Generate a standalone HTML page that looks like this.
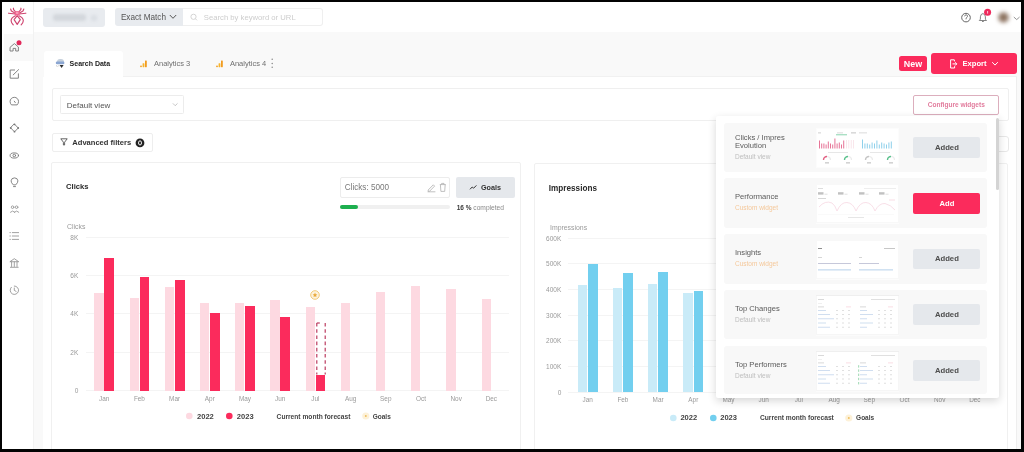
<!DOCTYPE html>
<html><head><meta charset="utf-8"><title>Dashboard</title>
<style>
html,body{margin:0;padding:0;}
body{width:1024px;height:452px;position:relative;overflow:hidden;background:#f9f9f9;font-family:"Liberation Sans", sans-serif;}
body div{position:absolute;box-sizing:border-box;}
.t{white-space:nowrap;filter:blur(0.25px);}
svg{position:absolute;overflow:visible;}
</style></head><body>

<div style="left:34.00px;top:2.00px;width:987.00px;height:30.30px;background:#fff;"></div>
<div style="left:2.00px;top:2.00px;width:32.30px;height:447.00px;background:#fff;border-right:1px solid #f2f2f2;"></div>
<div style="left:4.00px;top:34.00px;width:29.30px;height:26.50px;background:#f9f9f9;"></div>
<svg style="left:0;top:0" width="40" height="40" viewBox="0 0 40 40">
<g fill="none" stroke="#cf4570" stroke-width="1.15" stroke-linecap="round" stroke-linejoin="round">
<path d="M17.2 15.6 L14.1 19.6 L17.2 24.4 L20.3 19.6 Z"/>
<path d="M15.4 15.8 Q11 17.8 11.1 20.8 Q11.3 23.2 13.2 24.8"/>
<path d="M19 15.8 Q23.4 17.8 23.3 20.8 Q23.1 23.2 21.2 24.8"/>
<path d="M15.8 13.4 L11.4 11 L10.6 9 M15.5 14 L8.6 13.2 M16 12.4 L13.6 9.6 L13.4 8.2 M18.6 13.4 L23 11 L23.8 9 M18.9 14 L25.8 13.2 M18.4 12.4 L20.8 9.6 L21 8.2"/>
</g>
<ellipse cx="17.2" cy="13.2" rx="2.8" ry="2.3" fill="#ef6690"/>
<ellipse cx="17.2" cy="12.9" rx="1.4" ry="1.1" fill="#f7a0b8"/>
</svg>
<svg style="left:0;top:0" width="34" height="300" viewBox="0 0 34 300">
<g fill="none" stroke="#777" stroke-width="0.9" stroke-linejoin="round" stroke-linecap="round">
<path d="M10.4 47 L14.4 43.6 L18.4 47 L18.4 51 L15.7 51 L15.7 48.4 L13.1 48.4 L13.1 51 L10.4 51 Z"/>
<path d="M14.6 70 L10.2 70 L10.2 78.2 L18.4 78.2 L18.4 73.8"/><path d="M13.2 74.9 L18.6 69.6"/>
<path d="M11.2 104.6 A4.3 4.3 0 1 1 17.4 104.6 Z"/><path d="M14.3 101.2 L15.3 102.6"/>
<path d="M14.5 124.2 L18.3 128 L14.5 131.8 L10.7 128 Z"/><g fill="#777" stroke="none"><circle cx="14.5" cy="124.3" r="0.9"/><circle cx="18.2" cy="128" r="0.9"/><circle cx="14.5" cy="131.7" r="0.9"/><circle cx="10.8" cy="128" r="0.9"/></g>
<ellipse cx="14.3" cy="155.5" rx="4.2" ry="2.6"/><circle cx="14.3" cy="155.5" r="1.3"/>
<path d="M13 184.6 Q11 182.6 11.1 180.8 Q11.4 177.9 14.5 177.9 Q17.6 177.9 17.9 180.8 Q18 182.6 16 184.6 Z M13.5 186.6 L15.5 186.6"/>
<g stroke="#999"><circle cx="12.6" cy="207.2" r="1.3"/><circle cx="16.6" cy="207.2" r="1.3"/><path d="M10.4 212.2 Q12.6 209.6 14.8 212.2 M14.4 212.2 Q16.6 209.6 18.8 212.2"/></g>
<g stroke="#8a8a8a" stroke-width="0.8"><path d="M12.3 232.6 L18.6 232.6 M12.3 236 L18.6 236 M12.3 239.4 L18.6 239.4 M9.9 232.6 L10.4 232.6 M9.9 236 L10.4 236 M9.9 239.4 L10.4 239.4"/>
<path d="M10.2 261.5 L14.3 258.7 L18.4 261.5 Z M10.4 267.3 L18.2 267.3 M11.6 262 L11.6 266.5 M14.3 262 L14.3 266.5 M17 262 L17 266.5"/>
<path d="M11.3 287.3 A4.2 4.2 0 1 0 14.3 286"/><path d="M14.3 288 L14.3 290.4 L16.1 291.4"/></g>
</g>
<circle cx="19" cy="42.7" r="2.5" fill="#e2285a"/>
</svg>
<div style="left:43.00px;top:8.00px;width:62.00px;height:19.00px;background:#e8ebef;border-radius:3px;filter:blur(0.7px);"></div>
<div style="left:53.00px;top:14.00px;width:33.00px;height:7.00px;background:#d3d7dc;border-radius:3px;filter:blur(1.8px);"></div>
<div style="left:91.00px;top:14.50px;width:6.00px;height:6.00px;background:#dadee3;border-radius:2px;filter:blur(1.5px);"></div>
<div style="left:114.70px;top:7.90px;width:68.30px;height:18.00px;background:#e8ebef;border-radius:3px 0 0 3px;"></div>
<div class="t" style="left:120.90px;top:8.20px;height:20px;line-height:20px;font-size:8.2px;color:#555;font-weight:400;">Exact Match</div>
<svg style="left:168px;top:13px" width="10" height="8" viewBox="0 0 10 8"><path d="M1.8 2 L5 5.3 L8.2 2" fill="none" stroke="#555" stroke-width="1"/></svg>
<div style="left:182.50px;top:8.00px;width:140.00px;height:18.00px;background:#fff;border:1px solid #efefef;border-left:none;border-radius:0 3px 3px 0;"></div>
<svg style="left:189px;top:12px" width="12" height="12" viewBox="0 0 12 12"><circle cx="4.5" cy="4.8" r="2.6" fill="none" stroke="#cfcfcf" stroke-width="0.9"/><path d="M6.5 6.8 L8 8.3" stroke="#cfcfcf" stroke-width="0.9"/></svg>
<div class="t" style="left:203.80px;top:7.90px;height:20px;line-height:20px;font-size:7.7px;color:#cdcdcd;font-weight:400;">Search by keyword or URL</div>
<svg style="left:955px;top:6px" width="70" height="24" viewBox="955 6 70 24"><circle cx="966" cy="17.6" r="4.3" fill="none" stroke="#555" stroke-width="0.9"/><path d="M964.6 16.3 Q964.8 14.8 966.2 14.8 Q967.7 15 967.5 16.4 Q967.2 17.4 966.1 18.2 L966 19.3" fill="none" stroke="#555" stroke-width="0.8"/><path d="M979.3 20.5 L980.4 19.2 L980.4 16.8 Q980.7 13.8 982.9 13.6 Q985.1 13.8 985.4 16.8 L985.4 19.2 L986.5 20.5 Z M982 21.5 L983.8 21.5" fill="none" stroke="#777" stroke-width="0.9"/><circle cx="987.6" cy="12.3" r="3.5" fill="#ee2a5c"/><path d="M987.6 11 L987.6 13.6" stroke="#fff" stroke-width="0.9" opacity="0.8"/><circle cx="1003.5" cy="17.4" r="5.2" fill="#8c725f" style="filter:blur(2px)"/><path d="M1013.8 17 L1016.7 19.6 L1019.6 17" fill="none" stroke="#888" stroke-width="0.9"/></svg>
<div style="left:44.00px;top:51.00px;width:79.00px;height:27.00px;background:#fff;border-radius:3px 3px 0 0;"></div>
<div style="left:43.00px;top:77.00px;width:974.00px;height:372.00px;background:#fff;border-right:1px solid #eeeeee;"></div>
<div style="left:122.50px;top:76.00px;width:894.50px;height:1.00px;background:#f1f1f1;"></div>
<svg style="left:54px;top:57px" width="14" height="14" viewBox="0 0 14 14"><path d="M3 5 Q3 2 6 2 L7 2 Q10 2 10 5 Z" fill="#c5d0dc"/><rect x="1.8" y="4.5" width="8.6" height="2.7" rx="1.3" fill="#8ba6d2"/><path d="M2.4 8.2 L3.4 10 M4.2 8.8 L5.4 8.8" stroke="#bbb" stroke-width="0.7"/><path d="M5.6 8 L7.6 11 L9.6 8 Z" fill="#2f2f2f"/></svg>
<div class="t" style="left:69.60px;top:53.80px;height:20px;line-height:20px;font-size:7.0px;color:#222;font-weight:700;">Search Data</div>
<svg style="left:140.2px;top:60px" width="8" height="8" viewBox="0 0 8 8"><circle cx="1" cy="6.3" r="0.9" fill="#f29c1f"/><rect x="2.6" y="3.2" width="1.8" height="4" rx="0.4" fill="#f7b52c"/><rect x="5" y="0.5" width="1.8" height="6.7" rx="0.4" fill="#f29c1f"/></svg>
<div class="t" style="left:154.00px;top:53.70px;height:20px;line-height:20px;font-size:7.5px;color:#6f6f6f;font-weight:400;">Analytics 3</div>
<svg style="left:216px;top:60px" width="8" height="8" viewBox="0 0 8 8"><circle cx="1" cy="6.3" r="0.9" fill="#f29c1f"/><rect x="2.6" y="3.2" width="1.8" height="4" rx="0.4" fill="#f7b52c"/><rect x="5" y="0.5" width="1.8" height="6.7" rx="0.4" fill="#f29c1f"/></svg>
<div class="t" style="left:229.90px;top:53.70px;height:20px;line-height:20px;font-size:7.5px;color:#6f6f6f;font-weight:400;">Analytics 4</div>
<svg style="left:270px;top:56px" width="4" height="16" viewBox="0 0 4 16"><circle cx="2.2" cy="3.2" r="0.75" fill="#888"/><circle cx="2.2" cy="7.5" r="0.75" fill="#888"/><circle cx="2.2" cy="11.2" r="0.75" fill="#888"/></svg>
<div style="left:899.30px;top:56.00px;width:27.70px;height:14.50px;background:#fb2b5c;border-radius:2.5px;"></div>
<div class="t" style="left:903.80px;top:54.20px;height:20px;line-height:20px;font-size:8.9px;color:#fff;font-weight:700;">New</div>
<div style="left:931.00px;top:52.70px;width:86.00px;height:21.10px;background:#fb2b5c;border-radius:3px;"></div>
<svg style="left:948px;top:58px" width="11" height="12" viewBox="0 0 11 12"><path d="M6.3 1.8 L2.6 1.8 L2.6 10 L6.6 10 L6.6 8.2" fill="none" stroke="#fff" stroke-width="1"/><path d="M4.5 5.9 L8.8 5.9 M7.2 4.3 L8.8 5.9 L7.2 7.5" fill="none" stroke="#fff" stroke-width="1"/><path d="M6.3 1.8 L6.6 3.4" stroke="#fff" stroke-width="1"/></svg>
<div class="t" style="left:962.50px;top:54.40px;height:20px;line-height:20px;font-size:7.6px;color:#fff;font-weight:700;">Export</div>
<svg style="left:990px;top:61px" width="10" height="6" viewBox="0 0 10 6"><path d="M2.2 1.2 L5 4.1 L7.8 1.2" fill="none" stroke="#fff" stroke-width="1"/></svg>
<div style="left:51.50px;top:88.00px;width:957.00px;height:33.00px;border:1px solid #efefef;border-radius:2px;background:#fff;"></div>
<div style="left:60.30px;top:95.30px;width:123.90px;height:18.60px;border:1px solid #ececec;border-radius:1.5px;background:#fff;"></div>
<div class="t" style="left:66.80px;top:96.10px;height:20px;line-height:20px;font-size:8.0px;color:#555;font-weight:400;">Default view</div>
<svg style="left:171px;top:102px" width="8" height="6" viewBox="0 0 8 6"><path d="M1.9 1.4 L4.2 3.7 L6.5 1.4" fill="none" stroke="#bdbdbd" stroke-width="0.9"/></svg>
<div style="left:913.20px;top:95.20px;width:86.20px;height:19.40px;border:1px solid #dcaebd;border-radius:2px;background:#fff;"></div>
<div class="t" style="left:927.70px;top:95.40px;height:20px;line-height:20px;font-size:6.56px;color:#e27c9d;font-weight:700;">Configure widgets</div>
<div style="left:52.00px;top:132.50px;width:100.50px;height:19.30px;border:1px solid #eeeeee;border-radius:2px;background:#fff;"></div>
<svg style="left:59px;top:137px" width="10" height="10" viewBox="0 0 10 10"><path d="M1.8 1.8 L8.2 1.8 L5.6 5.2 L5.6 8 L4.4 8 L4.4 5.2 Z" fill="none" stroke="#555" stroke-width="0.9" stroke-linejoin="round"/></svg>
<div class="t" style="left:72.30px;top:133.30px;height:20px;line-height:20px;font-size:7.57px;color:#333;font-weight:700;">Advanced filters</div>
<svg style="left:134.5px;top:137.5px" width="10" height="10" viewBox="0 0 10 10"><circle cx="5" cy="4.9" r="4.4" fill="#222"/><ellipse cx="5" cy="4.9" rx="1.5" ry="2.1" fill="none" stroke="#fff" stroke-width="0.95"/></svg>
<div style="left:990.00px;top:135.50px;width:19.00px;height:16.00px;border:1px solid #e8e8e8;border-radius:3px;background:#fff;"></div>
<div style="left:51.30px;top:161.60px;width:470.20px;height:298.40px;border:1px solid #f0f0f0;border-radius:2px;background:#fff;"></div>
<div style="left:534.30px;top:162.50px;width:474.20px;height:297.50px;border:1px solid #f0f0f0;border-radius:2px;background:#fff;"></div>
<div class="t" style="left:66.00px;top:176.90px;height:20px;line-height:20px;font-size:7.64px;color:#2a2a2a;font-weight:700;">Clicks</div>
<div class="t" style="left:548.80px;top:179.00px;height:20px;line-height:20px;font-size:8.18px;color:#2a2a2a;font-weight:700;">Impressions</div>
<div style="left:340.40px;top:176.80px;width:109.60px;height:20.80px;border:1px solid #ececec;border-radius:2px;background:#fff;"></div>
<div class="t" style="left:344.70px;top:178.00px;height:20px;line-height:20px;font-size:8.17px;color:#7a7a7a;font-weight:400;">Clicks: 5000</div>
<svg style="left:425px;top:181px" width="24" height="12" viewBox="0 0 24 12"><path d="M3.2 9 L8.3 3.8 L9.6 5.1 L4.5 10.3 L3.2 10.3 Z M2.6 10.8 L10.4 10.8" fill="none" stroke="#b0b0b0" stroke-width="0.8"/><path d="M14.8 3.6 L20.8 3.6 M16.6 3.6 L16.6 2.4 L19 2.4 L19 3.6 M15.4 3.6 L15.9 10.4 L19.7 10.4 L20.2 3.6" fill="none" stroke="#b0b0b0" stroke-width="0.8"/></svg>
<div style="left:456.40px;top:176.80px;width:58.60px;height:20.80px;background:#e5e8ec;border-radius:2px;"></div>
<svg style="left:468px;top:182px" width="10" height="10" viewBox="0 0 10 10"><path d="M2 7.3 L4.2 5 L5.6 6.2 L8.4 3.4" fill="none" stroke="#333" stroke-width="1" stroke-linejoin="round"/></svg>
<div class="t" style="left:481.00px;top:178.00px;height:20px;line-height:20px;font-size:7.2px;color:#333;font-weight:700;">Goals</div>
<div style="left:340.40px;top:205.30px;width:109.60px;height:4.00px;background:#f0f0f0;border-radius:2px;"></div>
<div style="left:340.40px;top:205.30px;width:17.20px;height:4.00px;background:#1daf4f;border-radius:2px;"></div>
<div class="t" style="left:456.70px;top:197.90px;height:20px;line-height:20px;font-size:6.65px;color:#8a8a8a;font-weight:400;"><b style="color:#3a3a3a;font-size:6.5px">16 %</b> completed</div>
<div class="t" style="left:67.00px;top:216.60px;height:20px;line-height:20px;font-size:6.9px;color:#9a9a9a;font-weight:400;">Clicks</div><div style="left:85.50px;top:236.50px;width:423.50px;height:1.00px;background:#f4f4f4;"></div><div class="t" style="left:-121.70px;width:200px;text-align:right;top:227.60px;height:20px;line-height:20px;font-size:6.5px;color:#999;font-weight:400;">8K</div><div style="left:85.50px;top:274.90px;width:423.50px;height:1.00px;background:#f4f4f4;"></div><div class="t" style="left:-121.70px;width:200px;text-align:right;top:266.00px;height:20px;line-height:20px;font-size:6.5px;color:#999;font-weight:400;">6K</div><div style="left:85.50px;top:313.30px;width:423.50px;height:1.00px;background:#f4f4f4;"></div><div class="t" style="left:-121.70px;width:200px;text-align:right;top:304.40px;height:20px;line-height:20px;font-size:6.5px;color:#999;font-weight:400;">4K</div><div style="left:85.50px;top:351.70px;width:423.50px;height:1.00px;background:#f4f4f4;"></div><div class="t" style="left:-121.70px;width:200px;text-align:right;top:342.80px;height:20px;line-height:20px;font-size:6.5px;color:#999;font-weight:400;">2K</div><div style="left:85.50px;top:390.10px;width:423.50px;height:1.00px;background:#f4f4f4;"></div><div class="t" style="left:-121.70px;width:200px;text-align:right;top:381.20px;height:20px;line-height:20px;font-size:6.5px;color:#999;font-weight:400;">0</div><div style="left:94.30px;top:293.00px;width:9.30px;height:97.60px;background:#fdd9e1;"></div><div style="left:104.40px;top:257.70px;width:9.90px;height:132.90px;background:#fb2b5c;"></div><div class="t" style="left:4.20px;width:200px;text-align:center;top:389.30px;height:20px;line-height:20px;font-size:6.4px;color:#999;font-weight:400;">Jan</div><div style="left:129.50px;top:298.40px;width:9.30px;height:92.20px;background:#fdd9e1;"></div><div style="left:139.60px;top:276.80px;width:9.90px;height:113.80px;background:#fb2b5c;"></div><div class="t" style="left:39.40px;width:200px;text-align:center;top:389.30px;height:20px;line-height:20px;font-size:6.4px;color:#999;font-weight:400;">Feb</div><div style="left:164.70px;top:286.90px;width:9.30px;height:103.70px;background:#fdd9e1;"></div><div style="left:174.80px;top:280.30px;width:9.90px;height:110.30px;background:#fb2b5c;"></div><div class="t" style="left:74.60px;width:200px;text-align:center;top:389.30px;height:20px;line-height:20px;font-size:6.4px;color:#999;font-weight:400;">Mar</div><div style="left:199.90px;top:302.80px;width:9.30px;height:87.80px;background:#fdd9e1;"></div><div style="left:210.00px;top:312.50px;width:9.90px;height:78.10px;background:#fb2b5c;"></div><div class="t" style="left:109.80px;width:200px;text-align:center;top:389.30px;height:20px;line-height:20px;font-size:6.4px;color:#999;font-weight:400;">Apr</div><div style="left:235.10px;top:302.60px;width:9.30px;height:88.00px;background:#fdd9e1;"></div><div style="left:245.20px;top:306.20px;width:9.90px;height:84.40px;background:#fb2b5c;"></div><div class="t" style="left:145.00px;width:200px;text-align:center;top:389.30px;height:20px;line-height:20px;font-size:6.4px;color:#999;font-weight:400;">May</div><div style="left:270.30px;top:300.30px;width:9.30px;height:90.30px;background:#fdd9e1;"></div><div style="left:280.40px;top:317.10px;width:9.90px;height:73.50px;background:#fb2b5c;"></div><div class="t" style="left:180.20px;width:200px;text-align:center;top:389.30px;height:20px;line-height:20px;font-size:6.4px;color:#999;font-weight:400;">Jun</div><div style="left:305.50px;top:306.50px;width:9.30px;height:84.10px;background:#fdd9e1;"></div><div style="left:315.60px;top:374.80px;width:9.90px;height:15.80px;background:#fb2b5c;"></div><div class="t" style="left:215.40px;width:200px;text-align:center;top:389.30px;height:20px;line-height:20px;font-size:6.4px;color:#999;font-weight:400;">Jul</div><div style="left:340.70px;top:303.30px;width:9.30px;height:87.30px;background:#fdd9e1;"></div><div class="t" style="left:250.60px;width:200px;text-align:center;top:389.30px;height:20px;line-height:20px;font-size:6.4px;color:#999;font-weight:400;">Aug</div><div style="left:375.90px;top:291.50px;width:9.30px;height:99.10px;background:#fdd9e1;"></div><div class="t" style="left:285.80px;width:200px;text-align:center;top:389.30px;height:20px;line-height:20px;font-size:6.4px;color:#999;font-weight:400;">Sep</div><div style="left:411.10px;top:286.20px;width:9.30px;height:104.40px;background:#fdd9e1;"></div><div class="t" style="left:321.00px;width:200px;text-align:center;top:389.30px;height:20px;line-height:20px;font-size:6.4px;color:#999;font-weight:400;">Oct</div><div style="left:446.30px;top:288.70px;width:9.30px;height:101.90px;background:#fdd9e1;"></div><div class="t" style="left:356.20px;width:200px;text-align:center;top:389.30px;height:20px;line-height:20px;font-size:6.4px;color:#999;font-weight:400;">Nov</div><div style="left:481.50px;top:298.60px;width:9.30px;height:92.00px;background:#fdd9e1;"></div><div class="t" style="left:391.40px;width:200px;text-align:center;top:389.30px;height:20px;line-height:20px;font-size:6.4px;color:#999;font-weight:400;">Dec</div>
<svg style="left:310px;top:318px" width="22" height="60" viewBox="310 318 22 60"><g stroke="#b9345a" stroke-width="1.15" fill="none"><path d="M316.8 323 L316.8 374.5" stroke-dasharray="3.6 2.6"/><path d="M325.2 323 L325.2 374.5" stroke-dasharray="3.6 2.6"/><path d="M316.8 323 L319.8 323"/></g></svg>
<svg style="left:309px;top:288.8px" width="12" height="12" viewBox="0 0 12 12"><circle cx="6" cy="6" r="4.3" fill="#fdf3df" stroke="#f0c46a" stroke-width="0.9"/><path d="M6 3.6 L6.7 5.3 L8.4 5.4 L7.1 6.5 L7.5 8.2 L6 7.3 L4.5 8.2 L4.9 6.5 L3.6 5.4 L5.3 5.3 Z" fill="#e9a93a"/></svg>
<div class="t" style="left:550.00px;top:217.80px;height:20px;line-height:20px;font-size:6.9px;color:#9a9a9a;font-weight:400;">Impressions</div><div style="left:568.00px;top:237.50px;width:424.00px;height:1.00px;background:#f4f4f4;"></div><div class="t" style="left:361.30px;width:200px;text-align:right;top:228.60px;height:20px;line-height:20px;font-size:6.5px;color:#999;font-weight:400;">600K</div><div style="left:568.00px;top:263.17px;width:424.00px;height:1.00px;background:#f4f4f4;"></div><div class="t" style="left:361.30px;width:200px;text-align:right;top:254.27px;height:20px;line-height:20px;font-size:6.5px;color:#999;font-weight:400;">500K</div><div style="left:568.00px;top:288.83px;width:424.00px;height:1.00px;background:#f4f4f4;"></div><div class="t" style="left:361.30px;width:200px;text-align:right;top:279.93px;height:20px;line-height:20px;font-size:6.5px;color:#999;font-weight:400;">400K</div><div style="left:568.00px;top:314.50px;width:424.00px;height:1.00px;background:#f4f4f4;"></div><div class="t" style="left:361.30px;width:200px;text-align:right;top:305.60px;height:20px;line-height:20px;font-size:6.5px;color:#999;font-weight:400;">300K</div><div style="left:568.00px;top:340.17px;width:424.00px;height:1.00px;background:#f4f4f4;"></div><div class="t" style="left:361.30px;width:200px;text-align:right;top:331.27px;height:20px;line-height:20px;font-size:6.5px;color:#999;font-weight:400;">200K</div><div style="left:568.00px;top:365.83px;width:424.00px;height:1.00px;background:#f4f4f4;"></div><div class="t" style="left:361.30px;width:200px;text-align:right;top:356.93px;height:20px;line-height:20px;font-size:6.5px;color:#999;font-weight:400;">100K</div><div style="left:568.00px;top:391.50px;width:424.00px;height:1.00px;background:#f4f4f4;"></div><div class="t" style="left:361.30px;width:200px;text-align:right;top:382.60px;height:20px;line-height:20px;font-size:6.5px;color:#999;font-weight:400;">0</div><div style="left:577.80px;top:284.90px;width:9.30px;height:107.10px;background:#c9ebf8;"></div><div style="left:587.90px;top:263.90px;width:9.90px;height:128.10px;background:#72cfef;"></div><div class="t" style="left:487.70px;width:200px;text-align:center;top:390.30px;height:20px;line-height:20px;font-size:6.4px;color:#999;font-weight:400;">Jan</div><div style="left:613.00px;top:287.80px;width:9.30px;height:104.20px;background:#c9ebf8;"></div><div style="left:623.10px;top:273.10px;width:9.90px;height:118.90px;background:#72cfef;"></div><div class="t" style="left:522.90px;width:200px;text-align:center;top:390.30px;height:20px;line-height:20px;font-size:6.4px;color:#999;font-weight:400;">Feb</div><div style="left:648.20px;top:283.60px;width:9.30px;height:108.40px;background:#c9ebf8;"></div><div style="left:658.30px;top:271.90px;width:9.90px;height:120.10px;background:#72cfef;"></div><div class="t" style="left:558.10px;width:200px;text-align:center;top:390.30px;height:20px;line-height:20px;font-size:6.4px;color:#999;font-weight:400;">Mar</div><div style="left:683.40px;top:292.90px;width:9.30px;height:99.10px;background:#c9ebf8;"></div><div style="left:693.50px;top:290.80px;width:9.90px;height:101.20px;background:#72cfef;"></div><div class="t" style="left:593.30px;width:200px;text-align:center;top:390.30px;height:20px;line-height:20px;font-size:6.4px;color:#999;font-weight:400;">Apr</div><div style="left:718.60px;top:290.00px;width:9.30px;height:102.00px;background:#c9ebf8;"></div><div style="left:728.70px;top:285.00px;width:9.90px;height:107.00px;background:#72cfef;"></div><div class="t" style="left:628.50px;width:200px;text-align:center;top:390.30px;height:20px;line-height:20px;font-size:6.4px;color:#999;font-weight:400;">May</div><div style="left:753.80px;top:289.00px;width:9.30px;height:103.00px;background:#c9ebf8;"></div><div style="left:763.90px;top:283.00px;width:9.90px;height:109.00px;background:#72cfef;"></div><div class="t" style="left:663.70px;width:200px;text-align:center;top:390.30px;height:20px;line-height:20px;font-size:6.4px;color:#999;font-weight:400;">Jun</div><div style="left:789.00px;top:292.00px;width:9.30px;height:100.00px;background:#c9ebf8;"></div><div class="t" style="left:698.90px;width:200px;text-align:center;top:390.30px;height:20px;line-height:20px;font-size:6.4px;color:#999;font-weight:400;">Jul</div><div style="left:824.20px;top:291.00px;width:9.30px;height:101.00px;background:#c9ebf8;"></div><div class="t" style="left:734.10px;width:200px;text-align:center;top:390.30px;height:20px;line-height:20px;font-size:6.4px;color:#999;font-weight:400;">Aug</div><div style="left:859.40px;top:289.00px;width:9.30px;height:103.00px;background:#c9ebf8;"></div><div class="t" style="left:769.30px;width:200px;text-align:center;top:390.30px;height:20px;line-height:20px;font-size:6.4px;color:#999;font-weight:400;">Sep</div><div style="left:894.60px;top:287.00px;width:9.30px;height:105.00px;background:#c9ebf8;"></div><div class="t" style="left:804.50px;width:200px;text-align:center;top:390.30px;height:20px;line-height:20px;font-size:6.4px;color:#999;font-weight:400;">Oct</div><div style="left:929.80px;top:288.00px;width:9.30px;height:104.00px;background:#c9ebf8;"></div><div class="t" style="left:839.70px;width:200px;text-align:center;top:390.30px;height:20px;line-height:20px;font-size:6.4px;color:#999;font-weight:400;">Nov</div><div style="left:965.00px;top:290.00px;width:9.30px;height:102.00px;background:#c9ebf8;"></div><div class="t" style="left:874.90px;width:200px;text-align:center;top:390.30px;height:20px;line-height:20px;font-size:6.4px;color:#999;font-weight:400;">Dec</div>
<svg style="left:186.40px;top:412.40px" width="8" height="8" viewBox="0 0 8 8"><circle cx="3.3" cy="4" r="3.3" fill="#fdd9e1"/></svg><div class="t" style="left:197.00px;top:406.90px;height:20px;line-height:20px;font-size:7.55px;color:#444;font-weight:700;">2022</div><svg style="left:226.20px;top:412.40px" width="8" height="8" viewBox="0 0 8 8"><circle cx="3.3" cy="4" r="3.3" fill="#fb2b5c"/></svg><div class="t" style="left:236.80px;top:406.90px;height:20px;line-height:20px;font-size:7.55px;color:#444;font-weight:700;">2023</div><div class="t" style="left:276.60px;top:406.90px;height:20px;line-height:20px;font-size:6.65px;color:#444;font-weight:700;">Current month forecast</div><svg style="left:361.70px;top:412.40px" width="8" height="8" viewBox="0 0 8 8"><circle cx="3.8" cy="4" r="3.6" fill="#fdf1d8"/><circle cx="3.8" cy="4" r="1" fill="#efc060"/></svg><div class="t" style="left:372.70px;top:406.90px;height:20px;line-height:20px;font-size:6.51px;color:#444;font-weight:700;">Goals</div>
<svg style="left:669.80px;top:413.60px" width="8" height="8" viewBox="0 0 8 8"><circle cx="3.3" cy="4" r="3.3" fill="#c9ebf8"/></svg><div class="t" style="left:680.40px;top:408.10px;height:20px;line-height:20px;font-size:7.55px;color:#444;font-weight:700;">2022</div><svg style="left:709.60px;top:413.60px" width="8" height="8" viewBox="0 0 8 8"><circle cx="3.3" cy="4" r="3.3" fill="#72cfef"/></svg><div class="t" style="left:720.20px;top:408.10px;height:20px;line-height:20px;font-size:7.55px;color:#444;font-weight:700;">2023</div><div class="t" style="left:760.00px;top:408.10px;height:20px;line-height:20px;font-size:6.65px;color:#444;font-weight:700;">Current month forecast</div><svg style="left:845.10px;top:413.60px" width="8" height="8" viewBox="0 0 8 8"><circle cx="3.8" cy="4" r="3.6" fill="#fdf1d8"/><circle cx="3.8" cy="4" r="1" fill="#efc060"/></svg><div class="t" style="left:856.10px;top:408.10px;height:20px;line-height:20px;font-size:6.51px;color:#444;font-weight:700;">Goals</div>
<div style="left:716.30px;top:116.20px;width:283.20px;height:281.40px;background:#fff;box-shadow:0 3px 9px rgba(0,0,0,0.16);border-radius:2px;"></div>
<div style="left:996.00px;top:118.00px;width:3.00px;height:72.00px;background:#d4d4d4;border-radius:2px;"></div>
<div style="left:724.00px;top:122.60px;width:263.00px;height:49.60px;background:#f8f8f8;border-radius:3px;"></div>
<div class="t" style="left:735.00px;top:128.00px;height:20px;line-height:20px;font-size:7.6px;color:#5a5a5a;font-weight:400;">Clicks / Impres</div>
<div class="t" style="left:735.00px;top:136.10px;height:20px;line-height:20px;font-size:7.6px;color:#5a5a5a;font-weight:400;">Evolution</div>
<div class="t" style="left:735.00px;top:146.90px;height:20px;line-height:20px;font-size:6.5px;color:#bdbdbd;font-weight:400;">Default view</div>
<div style="left:815.50px;top:128.00px;width:83.80px;height:39.60px;background:#fff;border:1px solid #efefef;"></div>
<div style="left:816px;top:128.40px;width:83px;height:40px;opacity:0.85"><svg style="left:0px;top:0px" width="83" height="40" viewBox="0 0 83 40"><rect x="0" y="0" width="83" height="40" fill="#fff"/><rect x="2" y="4.5" width="3" height="0.8" fill="#bbb"/><rect x="21" y="4.5" width="6" height="0.8" fill="#ccc"/><rect x="20" y="6.5" width="11" height="0.7" fill="#3cb878"/><rect x="35" y="4.5" width="5" height="0.8" fill="#aaa"/><rect x="43" y="4.5" width="8" height="0.8" fill="#ccc"/><rect x="3.0" y="12.5" width="1" height="8" fill="#e35d86"/><rect x="5.2" y="15.5" width="1" height="5" fill="#e35d86"/><rect x="7.4" y="15.5" width="1" height="5" fill="#e35d86"/><rect x="9.6" y="16.5" width="1" height="4" fill="#e35d86"/><rect x="11.8" y="13.5" width="1" height="7" fill="#e35d86"/><rect x="14.0" y="15.5" width="1" height="5" fill="#e35d86"/><rect x="16.2" y="16.5" width="1" height="4" fill="#e35d86"/><rect x="18.4" y="10.5" width="1" height="10" fill="#e35d86"/><rect x="20.6" y="15.5" width="1" height="5" fill="#e35d86"/><rect x="22.8" y="14.5" width="1" height="6" fill="#e35d86"/><rect x="25.0" y="16.5" width="1" height="4" fill="#e35d86"/><rect x="27.2" y="12.5" width="1" height="8" fill="#e35d86"/><rect x="30.0" y="12" width="0.8" height="8.5" fill="#f8dbe3"/><rect x="32.4" y="12" width="0.8" height="8.5" fill="#f8dbe3"/><rect x="34.8" y="12" width="0.8" height="8.5" fill="#f8dbe3"/><rect x="37.2" y="12" width="0.8" height="8.5" fill="#f8dbe3"/><rect x="46.0" y="11.5" width="1" height="9" fill="#7cc9e8"/><rect x="48.4" y="15.5" width="1" height="5" fill="#7cc9e8"/><rect x="50.8" y="15.5" width="1" height="5" fill="#7cc9e8"/><rect x="53.2" y="16.5" width="1" height="4" fill="#7cc9e8"/><rect x="55.6" y="14.5" width="1" height="6" fill="#7cc9e8"/><rect x="58.0" y="15.5" width="1" height="5" fill="#7cc9e8"/><rect x="60.4" y="12.5" width="1" height="8" fill="#7cc9e8"/><rect x="62.8" y="16.5" width="1" height="4" fill="#7cc9e8"/><rect x="65.2" y="14.5" width="1" height="6" fill="#7cc9e8"/><rect x="67.6" y="15.5" width="1" height="5" fill="#7cc9e8"/><rect x="70.0" y="16.5" width="1" height="4" fill="#7cc9e8"/><rect x="72.4" y="14.5" width="1" height="6" fill="#7cc9e8"/><rect x="74.8" y="13.5" width="1" height="7" fill="#7cc9e8"/><rect x="12" y="24" width="20" height="0.8" fill="#ddd"/><rect x="54" y="24" width="20" height="0.8" fill="#ddd"/><path d="M7.5 32 A3.5 3.5 0 0 1 14.5 32" fill="none" stroke="#e8e8e8" stroke-width="1.2"/><path d="M7.5 32 A3.5 3.5 0 0 1 11 28.5" fill="none" stroke="#e0456e" stroke-width="1.4"/><rect x="9" y="34.5" width="4" height="0.8" fill="#999"/><path d="M28.5 32 A3.5 3.5 0 0 1 35.5 32" fill="none" stroke="#e8e8e8" stroke-width="1.2"/><path d="M28.5 32 A3.5 3.5 0 0 1 32 28.5" fill="none" stroke="#3cb878" stroke-width="1.4"/><rect x="30" y="34.5" width="4" height="0.8" fill="#999"/><path d="M49.5 32 A3.5 3.5 0 0 1 56.5 32" fill="none" stroke="#e8e8e8" stroke-width="1.2"/><path d="M49.5 32 A3.5 3.5 0 0 1 53 28.5" fill="none" stroke="#bbb" stroke-width="1.4"/><rect x="51" y="34.5" width="4" height="0.8" fill="#999"/><path d="M71.5 32 A3.5 3.5 0 0 1 78.5 32" fill="none" stroke="#e8e8e8" stroke-width="1.2"/><path d="M71.5 32 A3.5 3.5 0 0 1 75 28.5" fill="none" stroke="#3cb878" stroke-width="1.4"/><rect x="73" y="34.5" width="4" height="0.8" fill="#999"/></svg></div>
<div style="left:913.40px;top:137.00px;width:66.90px;height:20.90px;background:#e5e8ec;border-radius:2px;"></div>
<div class="t" style="left:846.90px;width:200px;text-align:center;top:137.80px;height:20px;line-height:20px;font-size:7.68px;color:#4d4d4d;font-weight:700;">Added</div>
<div style="left:724.00px;top:178.20px;width:263.00px;height:49.60px;background:#f8f8f8;border-radius:3px;"></div>
<div class="t" style="left:735.00px;top:187.10px;height:20px;line-height:20px;font-size:7.6px;color:#5a5a5a;font-weight:400;">Performance</div>
<div class="t" style="left:735.00px;top:198.00px;height:20px;line-height:20px;font-size:6.5px;color:#f5c89a;font-weight:400;">Custom widget</div>
<div style="left:815.50px;top:183.60px;width:83.80px;height:39.60px;background:#fff;border:1px solid #efefef;"></div>
<div style="left:816px;top:184.00px;width:83px;height:40px;opacity:0.6"><svg style="left:0px;top:0px" width="83" height="40" viewBox="0 0 83 40"><rect x="0" y="0" width="83" height="40" fill="#fff"/><rect x="2" y="4" width="5" height="0.8" fill="#bbb"/><rect x="48" y="4" width="32" height="0.8" fill="#ddd"/><rect x="2" y="8.2" width="5.5" height="2.4" fill="#999"/><rect x="8.5" y="9.8" width="3" height="0.7" fill="#bbb"/><rect x="22" y="8.2" width="5.5" height="2.4" fill="#999"/><rect x="28.5" y="9.8" width="3" height="0.7" fill="#bbb"/><rect x="43" y="8.2" width="5.5" height="2.4" fill="#999"/><rect x="49.5" y="9.8" width="3" height="0.7" fill="#bbb"/><rect x="63" y="8.2" width="5.5" height="2.4" fill="#999"/><rect x="69.5" y="9.8" width="3" height="0.7" fill="#bbb"/><rect x="2" y="14" width="8" height="0.8" fill="#aaa"/><rect x="73" y="15" width="6" height="2" fill="#fbe3ea"/><path d="M3 23 Q9 16 16 19 Q19 21 21 27 Q25 18 31 18.5 Q37 19 40 27 Q44 18 50 18.5 Q56 19 59 27 Q63 19 69 19.5 Q75 21 79 26" fill="none" stroke="#f3bfd0" stroke-width="0.8"/><rect x="2" y="30" width="76" height="0.5" fill="#eee"/><rect x="32" y="33" width="16" height="0.8" fill="#ccc"/></svg></div>
<div style="left:913.40px;top:192.70px;width:66.90px;height:21.00px;background:#fb2b5c;border-radius:2px;"></div>
<div class="t" style="left:846.90px;width:200px;text-align:center;top:193.80px;height:20px;line-height:20px;font-size:7.66px;color:#fff;font-weight:700;">Add</div>
<div style="left:724.00px;top:234.20px;width:263.00px;height:49.60px;background:#f8f8f8;border-radius:3px;"></div>
<div class="t" style="left:735.00px;top:243.10px;height:20px;line-height:20px;font-size:7.6px;color:#5a5a5a;font-weight:400;">Insights</div>
<div class="t" style="left:735.00px;top:254.00px;height:20px;line-height:20px;font-size:6.5px;color:#f5c89a;font-weight:400;">Custom widget</div>
<div style="left:815.50px;top:239.60px;width:83.80px;height:39.60px;background:#fff;border:1px solid #efefef;"></div>
<div style="left:816px;top:240.00px;width:83px;height:40px;opacity:0.6"><svg style="left:0px;top:0px" width="83" height="40" viewBox="0 0 83 40"><rect x="0" y="0" width="83" height="40" fill="#fff"/><rect x="2" y="8" width="4" height="1" fill="#444"/><rect x="68" y="8" width="11" height="0.9" fill="#999"/><rect x="2" y="17" width="4" height="0.8" fill="#aaa"/><rect x="43" y="17" width="3" height="0.8" fill="#aaa"/><rect x="2" y="23" width="33" height="0.8" fill="#8a8fb5"/><rect x="43" y="23" width="20" height="0.8" fill="#8a8fb5"/><rect x="2" y="29.5" width="33" height="0.8" fill="#6aa0d8"/><rect x="43" y="29.5" width="34" height="0.8" fill="#6aa0d8"/></svg></div>
<div style="left:913.40px;top:248.60px;width:66.90px;height:20.90px;background:#e5e8ec;border-radius:2px;"></div>
<div class="t" style="left:846.90px;width:200px;text-align:center;top:249.40px;height:20px;line-height:20px;font-size:7.68px;color:#4d4d4d;font-weight:700;">Added</div>
<div style="left:724.00px;top:289.90px;width:263.00px;height:49.60px;background:#f8f8f8;border-radius:3px;"></div>
<div class="t" style="left:735.00px;top:298.80px;height:20px;line-height:20px;font-size:7.6px;color:#5a5a5a;font-weight:400;">Top Changes</div>
<div class="t" style="left:735.00px;top:309.70px;height:20px;line-height:20px;font-size:6.5px;color:#bdbdbd;font-weight:400;">Default view</div>
<div style="left:815.50px;top:295.30px;width:83.80px;height:39.60px;background:#fff;border:1px solid #efefef;"></div>
<div style="left:816px;top:295.70px;width:83px;height:40px;opacity:0.45"><svg style="left:0px;top:0px" width="83" height="40" viewBox="0 0 83 40"><rect x="0" y="0" width="83" height="40" fill="#fff"/><rect x="2" y="3" width="6" height="0.8" fill="#999"/><rect x="55" y="3" width="24" height="0.8" fill="#aaa"/><rect x="2" y="7" width="4" height="0.6" fill="#ccc"/><rect x="2" y="10.5" width="6" height="0.8" fill="#999"/><rect x="30" y="10.5" width="5" height="0.8" fill="#f3a3b8"/><rect x="44" y="10.5" width="6" height="0.8" fill="#999"/><rect x="72" y="10.5" width="5" height="0.8" fill="#f3a3b8"/><rect x="2" y="14.0" width="8" height="0.8" fill="#7fa7d8"/><rect x="20" y="14.0" width="2" height="0.8" fill="#aaa"/><rect x="26" y="14.0" width="2" height="0.8" fill="#aaa"/><rect x="32" y="14.0" width="2" height="0.8" fill="#aaa"/><rect x="44" y="14.0" width="7" height="0.8" fill="#7fa7d8"/><rect x="62" y="14.0" width="2" height="0.8" fill="#aaa"/><rect x="68" y="14.0" width="2" height="0.8" fill="#aaa"/><rect x="74" y="14.0" width="2" height="0.8" fill="#aaa"/><rect x="2" y="18.2" width="12" height="0.8" fill="#7fa7d8"/><rect x="20" y="18.2" width="2" height="0.8" fill="#aaa"/><rect x="26" y="18.2" width="2" height="0.8" fill="#aaa"/><rect x="32" y="18.2" width="2" height="0.8" fill="#aaa"/><rect x="44" y="18.2" width="13" height="0.8" fill="#7fa7d8"/><rect x="62" y="18.2" width="2" height="0.8" fill="#aaa"/><rect x="68" y="18.2" width="2" height="0.8" fill="#aaa"/><rect x="74" y="18.2" width="2" height="0.8" fill="#aaa"/><rect x="2" y="22.4" width="16" height="0.8" fill="#7fa7d8"/><rect x="20" y="22.4" width="2" height="0.8" fill="#aaa"/><rect x="26" y="22.4" width="2" height="0.8" fill="#aaa"/><rect x="32" y="22.4" width="2" height="0.8" fill="#aaa"/><rect x="44" y="22.4" width="7" height="0.8" fill="#7fa7d8"/><rect x="62" y="22.4" width="2" height="0.8" fill="#aaa"/><rect x="68" y="22.4" width="2" height="0.8" fill="#aaa"/><rect x="74" y="22.4" width="2" height="0.8" fill="#aaa"/><rect x="2" y="26.6" width="8" height="0.8" fill="#7fa7d8"/><rect x="20" y="26.6" width="2" height="0.8" fill="#aaa"/><rect x="26" y="26.6" width="2" height="0.8" fill="#aaa"/><rect x="32" y="26.6" width="2" height="0.8" fill="#aaa"/><rect x="44" y="26.6" width="13" height="0.8" fill="#7fa7d8"/><rect x="62" y="26.6" width="2" height="0.8" fill="#aaa"/><rect x="68" y="26.6" width="2" height="0.8" fill="#aaa"/><rect x="74" y="26.6" width="2" height="0.8" fill="#aaa"/><rect x="2" y="30.8" width="12" height="0.8" fill="#7fa7d8"/><rect x="20" y="30.8" width="2" height="0.8" fill="#aaa"/><rect x="26" y="30.8" width="2" height="0.8" fill="#aaa"/><rect x="32" y="30.8" width="2" height="0.8" fill="#aaa"/><rect x="44" y="30.8" width="7" height="0.8" fill="#7fa7d8"/><rect x="62" y="30.8" width="2" height="0.8" fill="#aaa"/><rect x="68" y="30.8" width="2" height="0.8" fill="#aaa"/><rect x="74" y="30.8" width="2" height="0.8" fill="#aaa"/></svg></div>
<div style="left:913.40px;top:304.30px;width:66.90px;height:20.90px;background:#e5e8ec;border-radius:2px;"></div>
<div class="t" style="left:846.90px;width:200px;text-align:center;top:305.10px;height:20px;line-height:20px;font-size:7.68px;color:#4d4d4d;font-weight:700;">Added</div>
<div style="left:724.00px;top:345.70px;width:263.00px;height:48.80px;background:#f8f8f8;border-radius:3px;"></div>
<div class="t" style="left:735.00px;top:354.60px;height:20px;line-height:20px;font-size:7.6px;color:#5a5a5a;font-weight:400;">Top Performers</div>
<div class="t" style="left:735.00px;top:365.50px;height:20px;line-height:20px;font-size:6.5px;color:#bdbdbd;font-weight:400;">Default view</div>
<div style="left:815.50px;top:351.10px;width:83.80px;height:39.60px;background:#fff;border:1px solid #efefef;"></div>
<div style="left:816px;top:351.50px;width:83px;height:40px;opacity:0.45"><svg style="left:0px;top:0px" width="83" height="40" viewBox="0 0 83 40"><rect x="0" y="0" width="83" height="40" fill="#fff"/><rect x="2" y="3" width="6" height="0.8" fill="#999"/><rect x="55" y="3" width="24" height="0.8" fill="#aaa"/><rect x="2" y="7" width="4" height="0.6" fill="#ccc"/><rect x="2" y="10.5" width="6" height="0.8" fill="#999"/><rect x="30" y="10.5" width="5" height="0.8" fill="#f3a3b8"/><rect x="44" y="10.5" width="6" height="0.8" fill="#999"/><rect x="72" y="10.5" width="5" height="0.8" fill="#f3a3b8"/><rect x="2" y="14.0" width="8" height="0.8" fill="#7fa7d8"/><rect x="20" y="14.0" width="2" height="0.8" fill="#aaa"/><rect x="26" y="14.0" width="2" height="0.8" fill="#aaa"/><rect x="32" y="14.0" width="2" height="0.8" fill="#aaa"/><rect x="44" y="14.0" width="7" height="0.8" fill="#7fa7d8"/><rect x="62" y="14.0" width="2" height="0.8" fill="#aaa"/><rect x="68" y="14.0" width="2" height="0.8" fill="#aaa"/><rect x="74" y="14.0" width="2" height="0.8" fill="#aaa"/><rect x="42" y="13.2" width="1.2" height="2.4" fill="#49b870"/><rect x="2" y="18.2" width="12" height="0.8" fill="#7fa7d8"/><rect x="20" y="18.2" width="2" height="0.8" fill="#aaa"/><rect x="26" y="18.2" width="2" height="0.8" fill="#aaa"/><rect x="32" y="18.2" width="2" height="0.8" fill="#aaa"/><rect x="44" y="18.2" width="13" height="0.8" fill="#7fa7d8"/><rect x="62" y="18.2" width="2" height="0.8" fill="#aaa"/><rect x="68" y="18.2" width="2" height="0.8" fill="#aaa"/><rect x="74" y="18.2" width="2" height="0.8" fill="#aaa"/><rect x="42" y="17.4" width="1.2" height="2.4" fill="#49b870"/><rect x="2" y="22.4" width="16" height="0.8" fill="#7fa7d8"/><rect x="20" y="22.4" width="2" height="0.8" fill="#aaa"/><rect x="26" y="22.4" width="2" height="0.8" fill="#aaa"/><rect x="32" y="22.4" width="2" height="0.8" fill="#aaa"/><rect x="44" y="22.4" width="7" height="0.8" fill="#7fa7d8"/><rect x="62" y="22.4" width="2" height="0.8" fill="#aaa"/><rect x="68" y="22.4" width="2" height="0.8" fill="#aaa"/><rect x="74" y="22.4" width="2" height="0.8" fill="#aaa"/><rect x="42" y="21.599999999999998" width="1.2" height="2.4" fill="#49b870"/><rect x="2" y="26.6" width="8" height="0.8" fill="#7fa7d8"/><rect x="20" y="26.6" width="2" height="0.8" fill="#aaa"/><rect x="26" y="26.6" width="2" height="0.8" fill="#aaa"/><rect x="32" y="26.6" width="2" height="0.8" fill="#aaa"/><rect x="44" y="26.6" width="13" height="0.8" fill="#7fa7d8"/><rect x="62" y="26.6" width="2" height="0.8" fill="#aaa"/><rect x="68" y="26.6" width="2" height="0.8" fill="#aaa"/><rect x="74" y="26.6" width="2" height="0.8" fill="#aaa"/><rect x="42" y="25.8" width="1.2" height="2.4" fill="#49b870"/><rect x="2" y="30.8" width="12" height="0.8" fill="#7fa7d8"/><rect x="20" y="30.8" width="2" height="0.8" fill="#aaa"/><rect x="26" y="30.8" width="2" height="0.8" fill="#aaa"/><rect x="32" y="30.8" width="2" height="0.8" fill="#aaa"/><rect x="44" y="30.8" width="7" height="0.8" fill="#7fa7d8"/><rect x="62" y="30.8" width="2" height="0.8" fill="#aaa"/><rect x="68" y="30.8" width="2" height="0.8" fill="#aaa"/><rect x="74" y="30.8" width="2" height="0.8" fill="#aaa"/><rect x="42" y="30.0" width="1.2" height="2.4" fill="#49b870"/></svg></div>
<div style="left:913.40px;top:360.10px;width:66.90px;height:20.90px;background:#e5e8ec;border-radius:2px;"></div>
<div class="t" style="left:846.90px;width:200px;text-align:center;top:360.90px;height:20px;line-height:20px;font-size:7.68px;color:#4d4d4d;font-weight:700;">Added</div>
<div style="left:0.00px;top:0.00px;width:1024.00px;height:2.00px;background:#030303;"></div>
<div style="left:0.00px;top:0.00px;width:2.00px;height:452.00px;background:#030303;"></div>
<div style="left:1021.00px;top:0.00px;width:3.00px;height:452.00px;background:#030303;"></div>
<div style="left:0.00px;top:449.00px;width:1024.00px;height:3.00px;background:#030303;"></div>
</body></html>
